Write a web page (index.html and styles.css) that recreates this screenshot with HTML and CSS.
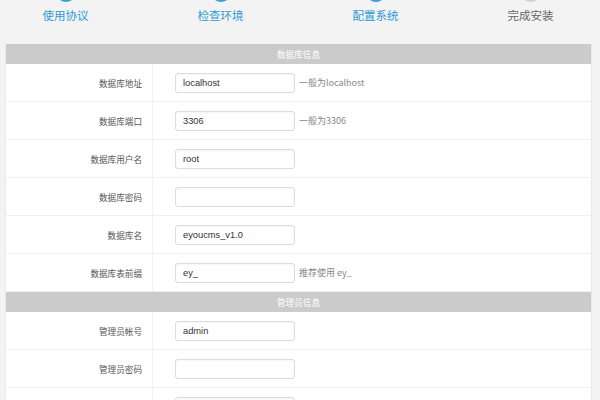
FILE: index.html
```html
<!DOCTYPE html>
<html lang="zh-CN">
<head>
<meta charset="utf-8">
<title>安装向导</title>
<link rel="stylesheet" href="styles.css">
</head>
<body>
<div class="steps">
  <div class="step done"><span class="dot"></span><span class="step-name">使用协议</span></div>
  <div class="step done"><span class="dot"></span><span class="step-name">检查环境</span></div>
  <div class="step done"><span class="dot"></span><span class="step-name">配置系统</span></div>
  <div class="step"><span class="dot"></span><span class="step-name">完成安装</span></div>
</div>
<table class="form">
  <colgroup><col class="c-label"><col></colgroup>
  <tr class="sec"><th colspan="2">数据库信息</th></tr>
  <tr><td class="lbl">数据库地址</td><td class="fld"><input class="ipt" type="text" value="localhost"><span class="hint">一般为localhost</span></td></tr>
  <tr><td class="lbl">数据库端口</td><td class="fld"><input class="ipt" type="text" value="3306"><span class="hint">一般为3306</span></td></tr>
  <tr><td class="lbl">数据库用户名</td><td class="fld"><input class="ipt" type="text" value="root"></td></tr>
  <tr><td class="lbl">数据库密码</td><td class="fld"><input class="ipt" type="password" value=""></td></tr>
  <tr><td class="lbl">数据库名</td><td class="fld"><input class="ipt" type="text" value="eyoucms_v1.0"></td></tr>
  <tr><td class="lbl">数据库表前缀</td><td class="fld"><input class="ipt" type="text" value="ey_"><span class="hint">推荐使用 ey_</span></td></tr>
  <tr class="sec"><th colspan="2">管理员信息</th></tr>
  <tr><td class="lbl">管理员帐号</td><td class="fld"><input class="ipt" type="text" value="admin"></td></tr>
  <tr><td class="lbl">管理员密码</td><td class="fld"><input class="ipt" type="password" value=""></td></tr>
  <tr><td class="lbl"></td><td class="fld"><input class="ipt" type="password" value=""></td></tr>
</table>
</body>
</html>
```
FILE: styles.css
```css
html, body {
  margin: 0;
  padding: 0;
  background: #f3f3f3;
  font-family: "Noto Sans CJK SC", "Liberation Sans", sans-serif;
  overflow: hidden;
}
.steps {
  display: grid;
  grid-template-columns: repeat(4, 155px);
  margin: -18px 0 0 -12px;
}
.step {
  display: flex;
  flex-direction: column;
  align-items: center;
}
.dot {
  width: 20px;
  height: 20px;
  border-radius: 50%;
  background: #d0d0d0;
}
.step.done .dot { background: #3aa0d8; }
.step-name {
  margin-top: 5px;
  font-size: 11.5px;
  line-height: 16px;
  color: #666;
}
.step.done .step-name { color: #2f9ad3; }
.form {
  margin: 21px 0 0 5px;
  width: 587px;
  border-collapse: collapse;
  table-layout: fixed;
  background: #fff;
  border: 1px solid #e8e8e8;
  border-top: none;
}
.c-label { width: 147px; }
.sec th {
  height: 20px;
  padding: 0;
  background: #cbcbcb;
  color: #fff;
  font-weight: normal;
  font-size: 8.6px;
  text-align: center;
}
.form td {
  height: 37px;
  padding: 0;
  border-bottom: 1px solid #efefef;
}
.lbl {
  text-align: right;
  padding-right: 10px !important;
  font-size: 8.6px;
  color: #555;
  border-right: 1px solid #f2f2f2;
}
.fld {
  padding-left: 22px !important;
  font-size: 0;
}
.ipt {
  box-sizing: border-box;
  width: 120px;
  height: 20px;
  margin: 0;
  padding: 0 7px;
  border: 1px solid #dcdcdc;
  border-radius: 3px;
  box-shadow: inset 0 1px 2px rgba(0,0,0,0.04);
  font-family: "Liberation Sans", "Noto Sans CJK SC", sans-serif;
  font-size: 9.3px;
  color: #333;
  vertical-align: middle;
  outline: none;
}
.hint {
  margin-left: 4px;
  font-size: 9px;
  color: #888;
  vertical-align: middle;
}
```
